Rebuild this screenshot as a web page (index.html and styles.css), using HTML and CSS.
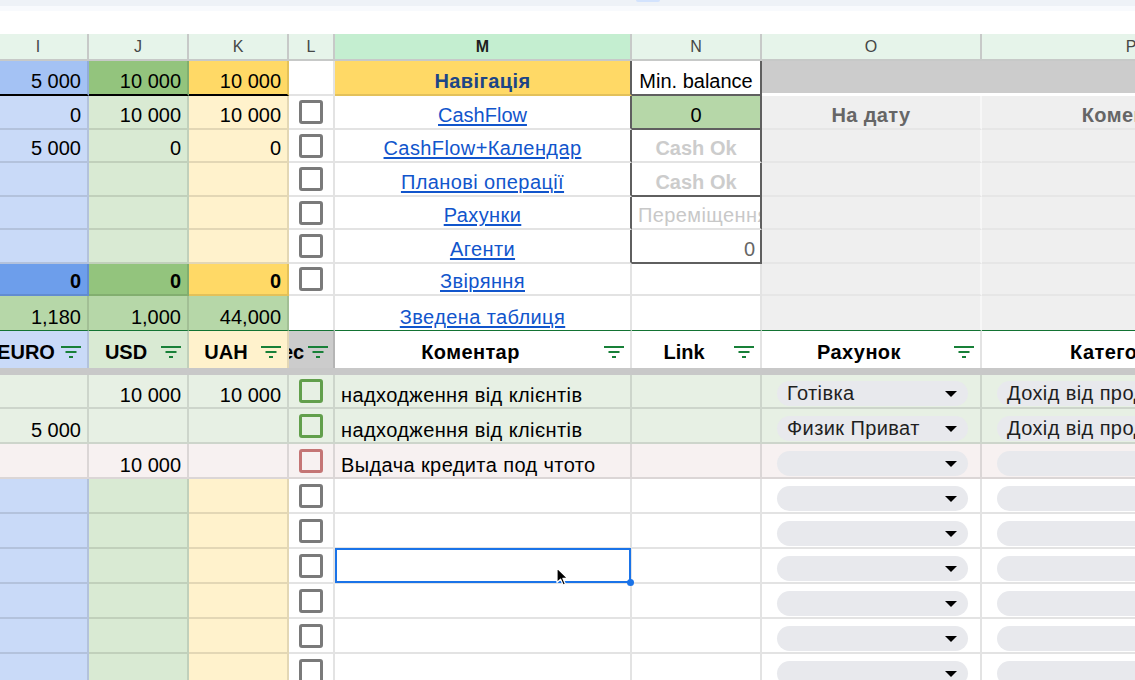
FILE: index.html
```html
<!DOCTYPE html>
<html lang="uk">
<head>
<meta charset="utf-8">
<title>Sheet</title>
<link rel="stylesheet" href="styles.css">
</head>
<body>
<div class="top">
  <div class="t1"><div class="pill"></div></div>
  <div class="t2"></div>
</div>
<div class="sheet">
  <!-- column letters -->
  <div class="hl">I</div><div class="hl">J</div><div class="hl">K</div><div class="hl">L</div><div class="hl act">M</div><div class="hl">N</div><div class="hl">O</div><div class="hl">P</div>

  <!-- row 1 -->
  <div class="c r b-blue1 blk">5 000</div>
  <div class="c r b-green1 blk">10 000</div>
  <div class="c r b-yel1 blk">10 000</div>
  <div class="c"></div>
  <div class="c ctr b-yel1 nav nbr cy">Навігація</div>
  <div class="c ctr nbr nbb mb">Min. balance</div>
  <div class="c b-dgray span2 wb"></div>

  <!-- row 2 -->
  <div class="c r b-blue">0</div>
  <div class="c r b-green">10 000</div>
  <div class="c r b-yel">10 000</div>
  <div class="c ckc"><span class="cb"></span></div>
  <div class="c ctr nbr"><a class="lnk" href="#">CashFlow</a></div>
  <div class="c ctr b-green2 nbr nbb">0</div>
  <div class="c ctr b-gray gh cy">На дату</div>
  <div class="c ctr b-gray gh cy">Коментар</div>

  <!-- row 3 -->
  <div class="c r b-blue">5 000</div>
  <div class="c r b-green">0</div>
  <div class="c r b-yel">0</div>
  <div class="c ckc"><span class="cb"></span></div>
  <div class="c ctr nbr cy"><a class="lnk" href="#">CashFlow+Календар</a></div>
  <div class="c ctr nbr cok">Cash Ok</div>
  <div class="c b-gray"></div>
  <div class="c b-gray"></div>

  <!-- row 4 -->
  <div class="c r b-blue"></div>
  <div class="c r b-green"></div>
  <div class="c r b-yel"></div>
  <div class="c ckc"><span class="cb"></span></div>
  <div class="c ctr nbr cy"><a class="lnk" href="#">Планові операції</a></div>
  <div class="c ctr nbr nbb cok">Cash Ok</div>
  <div class="c b-gray"></div>
  <div class="c b-gray"></div>

  <!-- row 5 -->
  <div class="c r b-blue"></div>
  <div class="c r b-green"></div>
  <div class="c r b-yel"></div>
  <div class="c ckc"><span class="cb"></span></div>
  <div class="c ctr nbr cy"><a class="lnk" href="#">Рахунки</a></div>
  <div class="c nbr lite cy">Переміщення</div>
  <div class="c b-gray"></div>
  <div class="c b-gray"></div>

  <!-- row 6 -->
  <div class="c r b-blue"></div>
  <div class="c r b-green"></div>
  <div class="c r b-yel"></div>
  <div class="c ckc"><span class="cb"></span></div>
  <div class="c ctr nbr cy"><a class="lnk" href="#">Агенти</a></div>
  <div class="c r nbr nbb dim">0</div>
  <div class="c b-gray"></div>
  <div class="c b-gray"></div>

  <!-- row 7 -->
  <div class="c r b-blue2 bold">0</div>
  <div class="c r b-green1 bold">0</div>
  <div class="c r b-yel1 bold">0</div>
  <div class="c ckc"><span class="cb"></span></div>
  <div class="c ctr cy"><a class="lnk" href="#">Звіряння</a></div>
  <div class="c"></div>
  <div class="c b-gray"></div>
  <div class="c b-gray"></div>

  <!-- row 8 -->
  <div class="c r b-green2 gl">1,180</div>
  <div class="c r b-green2 gl">1,000</div>
  <div class="c r b-green2 gl">44,000</div>
  <div class="c gl"></div>
  <div class="c ctr gl cy"><a class="lnk" href="#">Зведена таблиця</a></div>
  <div class="c gl"></div>
  <div class="c b-gray gl"></div>
  <div class="c b-gray gl"></div>

  <!-- header row 2 -->
  <div class="c h2 b-blue"><span class="ht">EURO</span><svg class="flt" viewBox="0 0 20 12"><rect x="0" y="0" width="20" height="2"/><rect x="4.5" y="5" width="11" height="2"/><rect x="8" y="10" width="4" height="2"/></svg></div>
  <div class="c h2 b-green"><span class="ht">USD</span><svg class="flt" viewBox="0 0 20 12"><rect x="0" y="0" width="20" height="2"/><rect x="4.5" y="5" width="11" height="2"/><rect x="8" y="10" width="4" height="2"/></svg></div>
  <div class="c h2 b-yel"><span class="ht">UAH</span><svg class="flt" viewBox="0 0 20 12"><rect x="0" y="0" width="20" height="2"/><rect x="4.5" y="5" width="11" height="2"/><rect x="8" y="10" width="4" height="2"/></svg></div>
  <div class="c h2 b-dgray hl2"><span class="ht rt">ес</span><svg class="flt" viewBox="0 0 20 12"><rect x="0" y="0" width="20" height="2"/><rect x="4.5" y="5" width="11" height="2"/><rect x="8" y="10" width="4" height="2"/></svg></div>
  <div class="c h2 cy"><span class="ht">Коментар</span><svg class="flt" viewBox="0 0 20 12"><rect x="0" y="0" width="20" height="2"/><rect x="4.5" y="5" width="11" height="2"/><rect x="8" y="10" width="4" height="2"/></svg></div>
  <div class="c h2"><span class="ht">Link</span><svg class="flt" viewBox="0 0 20 12"><rect x="0" y="0" width="20" height="2"/><rect x="4.5" y="5" width="11" height="2"/><rect x="8" y="10" width="4" height="2"/></svg></div>
  <div class="c h2 cy"><span class="ht">Рахунок</span><svg class="flt" viewBox="0 0 20 12"><rect x="0" y="0" width="20" height="2"/><rect x="4.5" y="5" width="11" height="2"/><rect x="8" y="10" width="4" height="2"/></svg></div>
  <div class="c h2 cy"><span class="ht">Категорія</span><svg class="flt" viewBox="0 0 20 12"><rect x="0" y="0" width="20" height="2"/><rect x="4.5" y="5" width="11" height="2"/><rect x="8" y="10" width="4" height="2"/></svg></div>

  <!-- frozen band -->
  <div class="band"></div>

  <!-- data row A -->
  <div class="c d r b-rowg"></div>
  <div class="c d r b-rowg">10 000</div>
  <div class="c d r b-rowg">10 000</div>
  <div class="c ckc b-rowg"><span class="cb green"></span></div>
  <div class="c d b-rowg cy">надходження від клієнтів</div>
  <div class="c d b-rowg"></div>
  <div class="c chc b-rowg"><div class="chip cy"><span>Готівка</span><span class="arr"></span></div></div>
  <div class="c chc b-rowg"><div class="chip cy"><span>Дохід від продажу</span></div></div>

  <!-- data row B -->
  <div class="c d r b-rowg">5 000</div>
  <div class="c d r b-rowg"></div>
  <div class="c d r b-rowg"></div>
  <div class="c ckc b-rowg"><span class="cb green"></span></div>
  <div class="c d b-rowg cy">надходження від клієнтів</div>
  <div class="c d b-rowg"></div>
  <div class="c chc b-rowg"><div class="chip cy"><span>Физик Приват</span><span class="arr"></span></div></div>
  <div class="c chc b-rowg"><div class="chip cy"><span>Дохід від продажу</span></div></div>

  <!-- data row C -->
  <div class="c d r b-rowp"></div>
  <div class="c d r b-rowp">10 000</div>
  <div class="c d r b-rowp"></div>
  <div class="c ckc b-rowp"><span class="cb red"></span></div>
  <div class="c d b-rowp cy">Выдача кредита под чтото</div>
  <div class="c d b-rowp"></div>
  <div class="c chc b-rowp"><div class="chip"><span></span><span class="arr"></span></div></div>
  <div class="c chc b-rowp"><div class="chip"><span></span></div></div>

  <!-- data rows D..I -->
  <div class="c b-blue"></div><div class="c b-green"></div><div class="c b-yel"></div>
  <div class="c ckc"><span class="cb"></span></div><div class="c"></div><div class="c"></div>
  <div class="c chc"><div class="chip"><span></span><span class="arr"></span></div></div>
  <div class="c chc"><div class="chip"><span></span></div></div>

  <div class="c b-blue"></div><div class="c b-green"></div><div class="c b-yel"></div>
  <div class="c ckc"><span class="cb"></span></div><div class="c"></div><div class="c"></div>
  <div class="c chc"><div class="chip"><span></span><span class="arr"></span></div></div>
  <div class="c chc"><div class="chip"><span></span></div></div>

  <div class="c b-blue"></div><div class="c b-green"></div><div class="c b-yel"></div>
  <div class="c ckc"><span class="cb"></span></div><div class="c sel"></div><div class="c"></div>
  <div class="c chc"><div class="chip"><span></span><span class="arr"></span></div></div>
  <div class="c chc"><div class="chip"><span></span></div></div>

  <div class="c b-blue"></div><div class="c b-green"></div><div class="c b-yel"></div>
  <div class="c ckc"><span class="cb"></span></div><div class="c"></div><div class="c"></div>
  <div class="c chc"><div class="chip"><span></span><span class="arr"></span></div></div>
  <div class="c chc"><div class="chip"><span></span></div></div>

  <div class="c b-blue"></div><div class="c b-green"></div><div class="c b-yel"></div>
  <div class="c ckc"><span class="cb"></span></div><div class="c"></div><div class="c"></div>
  <div class="c chc"><div class="chip"><span></span><span class="arr"></span></div></div>
  <div class="c chc"><div class="chip"><span></span></div></div>

  <div class="c b-blue"></div><div class="c b-green"></div><div class="c b-yel"></div>
  <div class="c ckc"><span class="cb"></span></div><div class="c"></div><div class="c"></div>
  <div class="c chc"><div class="chip"><span></span><span class="arr"></span></div></div>
  <div class="c chc"><div class="chip"><span></span></div></div>
</div>

<svg class="cursor" width="14" height="20" viewBox="0 0 14 20"><path d="M1 1 L1 15.5 L4.6 12.2 L7.2 18 L9.4 17 L6.9 11.4 L11.6 11.4 Z" fill="#000" stroke="#fff" stroke-width="1.2" stroke-linejoin="round"/></svg>
</body>
</html>
```

FILE: styles.css
```css
* { box-sizing: border-box; margin: 0; padding: 0; }

html, body {
  width: 1135px;
  height: 680px;
  overflow: hidden;
}

body {
  margin: 0;
  position: relative;
  background: #fff;
  font-family: "Liberation Sans", Arial, sans-serif;
  color: #000;
}

.top {
  height: 34px;
  display: flex;
  flex-direction: column;
}
.top .t1 {
  height: 6px;
  background: #eef2f7;
  position: relative;
}
.top .pill {
  position: absolute;
  left: 636px;
  top: 0;
  width: 24px;
  height: 2px;
  background: #d3e3fd;
  border-radius: 0 0 4px 4px;
}
.top .t2 {
  height: 5px;
  background: #f8fafd;
}

.sheet {
  display: grid;
  grid-template-columns: 100px 100px 100px 46px 297px 130px 220px 300px;
  grid-template-rows: 27px 35px 34px 33px 34px 33px 34px 32px 35px 37px 7px 34px repeat(8, 35px);
  margin-left: -11px;
  width: 1193px;
}

/* column letters */
.hl {
  display: flex;
  align-items: center;
  justify-content: center;
  background: #e6f4ea;
  border-right: 2px solid #c7c9c8;
  border-bottom: 2px solid #c7c9c8;
  font-size: 16px;
  color: #444746;
}
.hl.act {
  background: #c4eed0;
  font-weight: bold;
  color: #1f1f1f;
}

/* cells */
.c {
  display: flex;
  align-items: flex-end;
  padding: 0 6px 1px;
  border-right: 2px solid rgba(0, 0, 0, 0.11);
  border-bottom: 2px solid rgba(0, 0, 0, 0.11);
  font-size: 20px;
  line-height: 23px;
  white-space: nowrap;
  overflow: hidden;
  min-width: 0;
}
.c.d { padding-bottom: 0; }
.cy { letter-spacing: 0.4px; }
.r { justify-content: flex-end; }
.ctr { justify-content: center; }
.bold { font-weight: bold; }

.b-blue1 { background: #a4c2f4; }
.b-blue { background: #c9daf8; }
.b-blue2 { background: #6d9eeb; }
.b-green1 { background: #93c47d; }
.b-green { background: #d9ead3; }
.b-green2 { background: #b6d7a8; }
.b-yel1 { background: #ffd966; }
.b-yel { background: #fff2cc; }
.b-gray {
  background: #efefef;
  border-right-color: #f7f7f7;
  border-bottom-color: #e6e6e6;
}
.b-dgray { background: #cccccc; }
.b-rowg { background: #e7f0e4; }
.b-rowp { background: #f7f1f1; }

.blk { border-bottom: 2px solid #000; }
.nbr { border-right: 2px solid #5f5f5f; }
.nbb { border-bottom: 2px solid #5f5f5f; }
.span2 { grid-column: span 2; }
.wb { border-bottom: 3px solid #fff; border-right: none; }
.gl { border-bottom: 1px solid #137333; }

.nav {
  font-weight: bold;
  color: #1c4587;
}
.mb { padding: 0 2px 1px; }
.gh {
  font-weight: bold;
  color: #666666;
}
.cok {
  font-weight: bold;
  color: #cccccc;
}
.lite {
  color: #c8c8c8;
  padding-right: 0;
}
.dim {
  color: #666666;
  padding-right: 5px;
}

.lnk {
  color: #1155cc;
  text-decoration: underline;
  text-decoration-thickness: 1.5px;
  text-underline-offset: 2px;
}

/* checkbox */
.ckc {
  align-items: center;
  justify-content: center;
  padding: 0;
}
.cb {
  display: block;
  width: 24px;
  height: 24px;
  border: 3px solid #7a7a7a;
  border-radius: 3px;
  background: transparent;
}
.cb.green { border-color: #629f4c; }
.cb.red { border-color: #c47575; }

/* filter header row */
.h2 {
  font-weight: bold;
  padding: 0 6px 4px 6px;
  border-bottom: none;
  gap: 4px;
}
.h2 .ht {
  flex: 1;
  min-width: 0;
  text-align: center;
  overflow: hidden;
}
.h2 .ht.rt {
  direction: rtl;
  text-align: right;
}
.hl2 { padding-left: 0; padding-right: 5px; }
.flt {
  flex: none;
  width: 20px;
  height: 12px;
  fill: #188038;
  margin-bottom: 6px;
}

.band {
  grid-column: 1 / -1;
  background: #c8c8c8;
}

/* chips */
.chc {
  padding: 0 12px 1px 15px;
}
.chip {
  flex: 1;
  height: 25px;
  border-radius: 13px;
  background: #e8e9ed;
  display: flex;
  align-items: center;
  justify-content: space-between;
  padding: 0 11px 0 10px;
  font-size: 20px;
  line-height: 23px;
  color: #1f1f1f;
  overflow: hidden;
  white-space: nowrap;
}
.arr {
  width: 0;
  height: 0;
  border-left: 6px solid transparent;
  border-right: 6px solid transparent;
  border-top: 6px solid #000;
  margin-left: auto;
}

/* selection */
.sel {
  position: relative;
  overflow: visible;
}
.sel::before {
  content: "";
  position: absolute;
  top: -1px;
  left: 0;
  right: -1px;
  bottom: -1px;
  border: 2px solid #1a73e8;
}
.sel::after {
  content: "";
  position: absolute;
  right: -4px;
  bottom: -4px;
  width: 7px;
  height: 7px;
  border-radius: 50%;
  background: #1a73e8;
}

.cursor {
  position: absolute;
  left: 556px;
  top: 567px;
}
```
